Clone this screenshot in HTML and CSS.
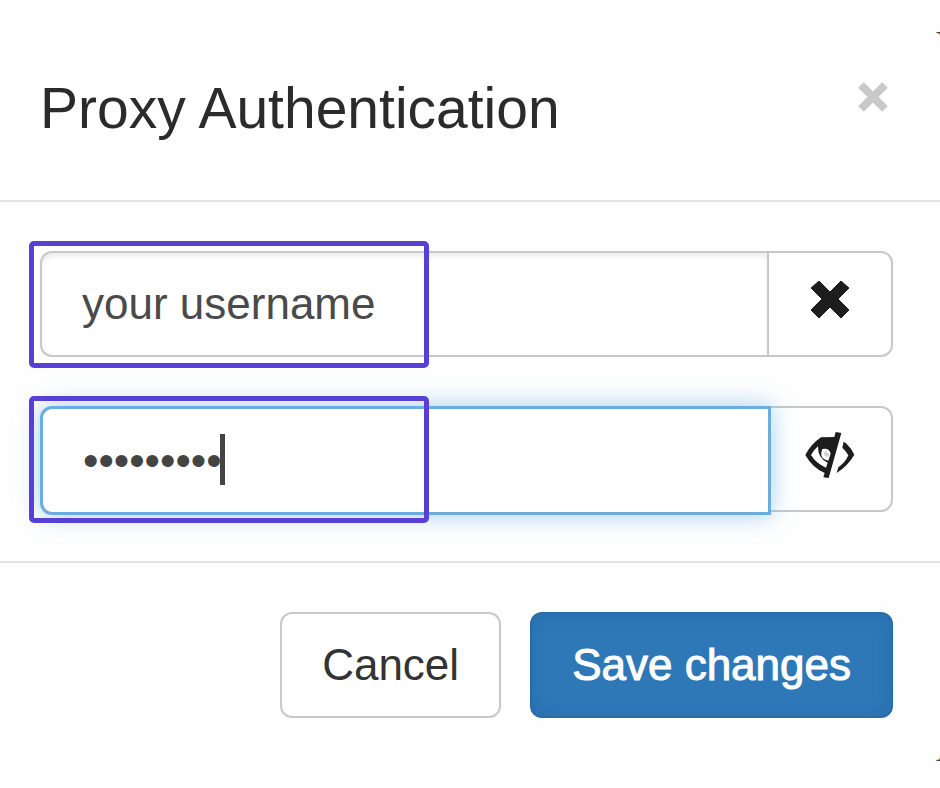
FILE: index.html
```
<!DOCTYPE html>
<html lang="en">
<head>
    <meta charset="UTF-8">
    <meta name="viewport" content="width=device-width, initial-scale=1.0">
    <title>Proxy Authentication</title>
    <link rel="stylesheet" href="styles.css">
</head>
<body>
    <form class="modal" role="dialog" aria-labelledby="modalTitle">
        <div class="modal-header">
            <h4 class="modal-title" id="modalTitle">Proxy Authentication</h4>
            <button class="close" type="button" aria-label="Close">
                <svg width="32" height="32" viewBox="0 0 32 32"><path d="M4 4 28 28M28 4 4 28" stroke="#c9c9c9" stroke-width="8"/></svg>
            </button>
        </div>

        <div class="modal-body">
            <div class="input-group">
                <input class="form-control" type="text" value="your username" aria-label="Username">
                <button class="addon" type="button" aria-label="Clear username">
                    <svg width="40" height="40" viewBox="0 0 40 40"><path d="M9 1 20 12 31 1 39 8 28 19 39 30 31 38 20 27 9 38 1 30 12 19 1 8Z" fill="#1d1d1d" stroke="#1d1d1d" stroke-linejoin="round"/></svg>
                </button>
                <span class="highlight"></span>
            </div>
            <div class="input-group">
                <input class="form-control focused" type="password" value="password1" aria-label="Password">
                <button class="addon" type="button" aria-label="Show password">
                    <svg width="50" height="48" viewBox="78 90 150 144">
                        <path d="M170 93 187 96 149 231 133 229 137 216Q99 199 79 162 96 129 126 109L166 108Z" fill="#1d1d1d"/>
                        <path d="M117 136Q104 147 96 162 111 187 141 200L146 185Q116 172 117 136Z" fill="#fff"/>
                        <path d="M130 144Q120 166 137 175L148 179 155 158Q150 139 130 144Z" fill="#fff"/>
                        <path d="M136 153Q133 163 141 168L149 165 151 157Q144 158 143 149Z" fill="#1d1d1d" opacity=".2"/>
                        <path d="M194 122 201 127Q218 143 226 161 208 193 173 216L178 199Q200 183 208 163 201 150 190 140Z" fill="#1d1d1d"/>
                    </svg>
                </button>
                <span class="caret"></span>
                <span class="highlight"></span>
            </div>
        </div>

        <div class="modal-footer">
            <button class="btn btn-default" type="button">Cancel</button>
            <button class="btn btn-primary" type="submit">Save changes</button>
        </div>
    </form>

    <!-- page text showing past the dialog's edge -->
    <div class="backdrop-text" aria-hidden="true">
        <span class="peek peek-top">V</span>
        <span class="peek peek-bottom">A</span>
    </div>
</body>
</html>
```

FILE: styles.css
```
* {
    margin: 0;
    padding: 0;
    box-sizing: border-box;
}

body {
    font-family: "Liberation Sans", Arial, sans-serif;
    font-size: 44px;
    color: #333;
    background: #fefefe;
    min-height: 100vh;
    position: relative;
    overflow: hidden;
}

button,
input {
    font: inherit;
}

button {
    cursor: pointer;
}

svg {
    display: block;
}

.modal-header {
    display: flex;
    justify-content: space-between;
    align-items: flex-start;
    padding: 76px 51px 60px 40px;
    border-bottom: 2px solid #e3e3e3;
}

.modal-title {
    font-size: 57px;
    font-weight: normal;
    line-height: 64px;
    color: #2b2b2b;
}

.close {
    margin-top: 5px;
    border: none;
    background: none;
}

.modal-body {
    display: flex;
    flex-direction: column;
    gap: 49px;
    padding: 49px 47px 46px 40px;
}

.input-group {
    display: flex;
    align-items: flex-start;
    position: relative;
}

.form-control {
    flex: 1;
    min-width: 0;
    height: 106px;
    padding: 0 40px;
    border: 2px solid #c8c8c8;
    border-right: none;
    border-radius: 12px 0 0 12px;
    background: #fff;
    color: #4a4a4a;
    outline: none;
    box-shadow: inset 0 4px 4px rgba(0, 0, 0, 0.07);
}

.form-control.focused {
    position: relative;
    z-index: 1;
    height: 109px;
    margin-right: -4px;
    border: 3px solid #6bade0;
    caret-color: transparent;
    color: #444;
    box-shadow: 0 0 24px rgba(102, 175, 233, 0.6);
}

.addon {
    display: flex;
    align-items: center;
    justify-content: center;
    width: 126px;
    height: 106px;
    padding-bottom: 8px;
    border: 2px solid #c8c8c8;
    border-radius: 0 12px 12px 0;
    background: #fff;
}

.highlight {
    position: absolute;
    z-index: 2;
    top: -10px;
    left: -11px;
    width: 400px;
    height: 127px;
    border: 5px solid #5840d6;
    border-radius: 5px;
    pointer-events: none;
}

.caret {
    position: absolute;
    z-index: 2;
    top: 28px;
    left: 180px;
    width: 5px;
    height: 51px;
    background: #444;
}

.modal-footer {
    display: flex;
    justify-content: flex-end;
    gap: 29px;
    padding: 49px 47px;
    border-top: 2px solid #e3e3e3;
}

.btn {
    height: 106px;
    padding: 0 40px;
    border: 2px solid #c8c8c8;
    border-radius: 12px;
}

.btn-default {
    background: #fff;
    color: #333;
}

.btn-primary {
    background: #2f78b7;
    border-color: #2a6ca9;
    color: #fff;
    box-shadow: inset 0 0 16px #256fae;
    -webkit-text-stroke: 1px #fff;
}

.backdrop-text {
    position: absolute;
    top: 0;
    right: 0;
    bottom: 0;
    width: 4px;
    overflow: hidden;
    font-family: "Liberation Serif", serif;
    font-size: 40px;
    line-height: 40px;
    color: #444;
    pointer-events: none;
}

.peek {
    position: absolute;
    left: 0;
}

.peek-top {
    top: 25px;
}

.peek-bottom {
    bottom: 20px;
}
```
